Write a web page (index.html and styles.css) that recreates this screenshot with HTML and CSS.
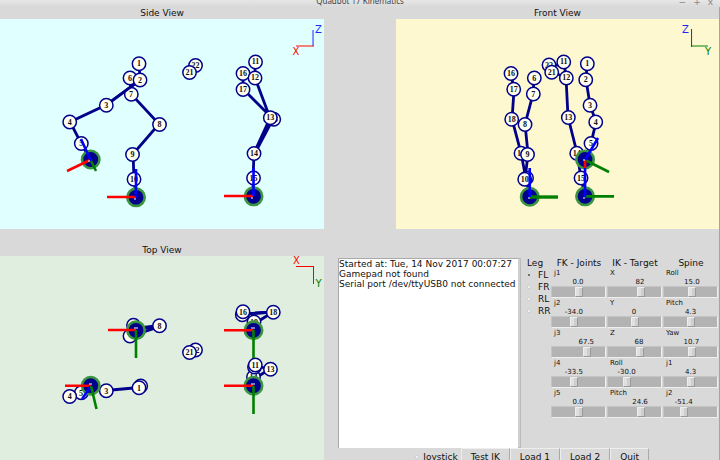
FILE: index.html
```html
<!DOCTYPE html>
<html lang="en">
<head>
<meta charset="utf-8">
<title>Quadbot 17 Kinematics</title>
<link rel="stylesheet" href="styles.css">
</head>
<body>
<header class="titlebar">
  <h1 class="title">Quadbot 17 Kinematics</h1>
  <div class="window-actions"><span>−</span><span>+</span><span>x</span></div>
</header>
<main class="window">
  <section class="views">
    <figure class="view">
      <figcaption>Side View</figcaption>
      <svg class="canvas side" viewBox="0 19 324 210" role="img" aria-label="Side View">
        <g class="axis"><path class="z" d="M313 30V46"/><path class="x" d="M296 46H314"/></g>
        <text class="name z" x="318.500" y="33">Z</text><text class="name x" x="296" y="55">X</text>
        <path class="link" d="M139 64L140 80L106 105L70 122L81 143L90 159M130 78L131 94L159 124L133 154L134 179L136 197M255 62V78L270 118L254 153L253 178V196M243 74V89L273 119L255 153"/>
        <g class="node"><circle cx="195.500" cy="65.500" r="6.700"/><text x="195.500" y="68.300">22</text></g>
        <g class="node"><circle cx="189.500" cy="72.500" r="6.700"/><text x="189.500" y="75.300">21</text></g>
        <g class="node"><circle cx="130" cy="78" r="6.700"/><text x="130" y="81">6</text></g>
        <g class="node"><circle cx="131.300" cy="94.300" r="6.700"/><text x="131" y="97">7</text></g>
        <g class="node"><circle cx="139" cy="63.700" r="6.700"/><text x="139" y="66.500">1</text></g>
        <path class="link" d="M140 80L106 105"/>
        <g class="node"><circle cx="140" cy="80" r="6.700"/><text x="140" y="82.700">2</text></g>
        <g class="node"><circle cx="106.300" cy="105.300" r="6.700"/><text x="106.300" y="108">3</text></g>
        <g class="node"><circle cx="69.700" cy="122" r="6.700"/><text x="69.700" y="124.700">4</text></g>
        <g class="node"><circle cx="81.300" cy="143.500" r="6.700"/><text x="81.300" y="146">5</text></g>
        <g class="node"><circle cx="159.500" cy="124.500" r="6.700"/><text x="159.500" y="127">8</text></g>
        <g class="node"><circle cx="132.500" cy="154.500" r="6.700"/><text x="132.500" y="157">9</text></g>
        <g class="node"><circle cx="134" cy="179.300" r="6.700"/><text x="134" y="182">10</text></g>
        <g class="node"><circle cx="243" cy="73.500" r="6.700"/><text x="243" y="76.300">16</text></g>
        <g class="node"><circle cx="243" cy="89.500" r="6.700"/><text x="243" y="92">17</text></g>
        <g class="node"><circle cx="255.500" cy="62" r="6.700"/><text x="255.500" y="64.500">11</text></g>
        <g class="node"><circle cx="255" cy="78" r="6.700"/><text x="255" y="80.500">12</text></g>
        <g class="node"><circle cx="273.700" cy="119.300" r="6.700"/><text x="273.700" y="122">18</text></g>
        <g class="node"><circle cx="270.300" cy="117.700" r="6.700"/><text x="270.300" y="120.500">13</text></g>
        <g class="node"><circle cx="254" cy="153.500" r="6.700"/><text x="254" y="156">14</text></g>
        <g class="node"><circle cx="253.500" cy="178" r="6.700"/><text x="253.500" y="180.700">15</text></g>
        <g class="foot"><circle cx="90.700" cy="159.500" r="8.700"/><circle cx="136" cy="197.300" r="8.700"/><circle cx="253.500" cy="196.300" r="8.700"/></g>
        <g class="limb"><path class="x" d="M90 160L67 171M136 197H107M253 196H224"/><path class="y" d="M90 159L96 171"/><path class="z" d="M91 161L81 139M136 197V169M253.500 196V168"/></g>
        <path class="speck" d="M134 199h2M251 198h2M88 161h2"/>
      </svg>
    </figure>
    <figure class="view">
      <figcaption>Front View</figcaption>
      <svg class="canvas front" viewBox="396 19 323 210" role="img" aria-label="Front View">
        <g class="axis"><path class="z" d="M691.500 29V47"/><path class="y" d="M691 46H708"/></g>
        <text class="name z" x="685.500" y="33">Z</text><text class="name y" x="708" y="55">Y</text>
        <path class="link" d="M511 74L514 90L512 119L521 153L526 179L530 197M534 78L533 94L525 124L528 154L525 179M564 62L566 78L568 117L577 153L581 178L585 196M587 64L586 80L590 105L596 122L591 143L585 159"/>
        <g class="node"><circle cx="511" cy="73.500" r="6.700"/><text x="511" y="76.300">16</text></g>
        <g class="node"><circle cx="513.700" cy="89.300" r="6.700"/><text x="513.700" y="92">17</text></g>
        <g class="node"><circle cx="534.300" cy="78" r="6.700"/><text x="534.300" y="80.700">6</text></g>
        <g class="node"><circle cx="533.300" cy="94" r="6.700"/><text x="533.300" y="96.700">7</text></g>
        <g class="node"><circle cx="549" cy="65" r="6.700"/><text x="549" y="68">22</text></g>
        <path class="link" d="M555 65L559 65M556 74L560 75"/>
        <g class="node"><circle cx="563.700" cy="62" r="6.700"/><text x="563.700" y="64.500">11</text></g>
        <g class="node"><circle cx="566.300" cy="78" r="6.700"/><text x="566.300" y="80.500">12</text></g>
        <g class="node"><circle cx="551.700" cy="72.300" r="6.700"/><text x="551.700" y="75">21</text></g>
        <g class="node"><circle cx="587.300" cy="63.700" r="6.700"/><text x="587.300" y="66.500">1</text></g>
        <g class="node"><circle cx="585.700" cy="79.700" r="6.700"/><text x="585.700" y="82.500">2</text></g>
        <g class="node"><circle cx="590" cy="105.300" r="6.700"/><text x="590" y="108">3</text></g>
        <g class="node"><circle cx="511.700" cy="119.300" r="6.700"/><text x="511.700" y="122">18</text></g>
        <g class="node"><circle cx="525" cy="124.500" r="6.700"/><text x="525" y="127">8</text></g>
        <g class="node"><circle cx="568.300" cy="117.500" r="6.700"/><text x="568.300" y="120.300">13</text></g>
        <g class="node"><circle cx="595.700" cy="122" r="6.700"/><text x="595.700" y="124.500">4</text></g>
        <g class="node"><circle cx="521" cy="153.300" r="6.700"/><text x="521" y="156">19</text></g>
        <g class="node"><circle cx="527.500" cy="154.500" r="6.700"/><text x="527.500" y="157">9</text></g>
        <g class="node"><circle cx="526.500" cy="178" r="6.700"/></g>
        <g class="node"><circle cx="524.700" cy="179.300" r="6.700"/><text x="524.700" y="182">10</text></g>
        <g class="node"><circle cx="576.700" cy="153.300" r="6.700"/><text x="576.700" y="156">14</text></g>
        <g class="node"><circle cx="591" cy="143.500" r="6.700"/><text x="591" y="146">5</text></g>
        <g class="node"><circle cx="581" cy="178" r="6.700"/><text x="581" y="180.700">15</text></g>
        <g class="foot"><circle cx="529.700" cy="196.700" r="8.700"/><circle cx="585" cy="159.500" r="8.700"/><circle cx="585" cy="196.300" r="8.700"/></g>
        <g class="limb"><path class="y wide" d="M530 197H558"/><path class="y" d="M585 160L609 172M585 196.300H614"/><path class="z" d="M529.700 197V168M585 197V167M585 160L598 138"/><path class="x" d="M585 160V168"/></g>
        <path class="speck" d="M528 198h2M583 198h2M583 160h2"/>
      </svg>
    </figure>
  </section>
  <section class="lower">
    <figure class="view">
      <figcaption>Top View</figcaption>
      <svg class="canvas top" viewBox="0 256 324 204" role="img" aria-label="Top View">
        <g class="axis"><path class="x" d="M296 266.500H313"/><path class="y" d="M313.500 266V284"/></g>
        <text class="name x" x="296.500" y="264">X</text><text class="name y" x="318.500" y="287">Y</text>
        <path class="link heavy" d="M136 329L159 326"/>
        <path class="link" d="M131 336L159 327M106 390.500L139 387.500M90 386L106 390M70 396L81 393M243 314L273 312L254 324M255 366L270 369L254 379"/>
        <g class="node"><circle cx="133.500" cy="325.300" r="6.700"/></g>
        <g class="node"><circle cx="130" cy="336" r="6.700"/></g>
        <g class="node"><circle cx="159.500" cy="325.700" r="6.700"/><text x="159.500" y="328.500">8</text></g>
        <g class="node"><circle cx="195.500" cy="350" r="6.700"/><text x="195.500" y="352.500">22</text></g>
        <g class="node"><circle cx="189.500" cy="352.500" r="6.700"/><text x="189.500" y="355.300">21</text></g>
        <g class="node"><circle cx="254" cy="322" r="6.700"/><text x="254" y="325">19</text></g>
        <g class="node"><circle cx="242.300" cy="314.700" r="6.700"/></g>
        <path class="link" d="M243 314L273 312"/>
        <g class="node"><circle cx="243" cy="311.700" r="6.700"/><text x="243" y="314.500">16</text></g>
        <g class="node"><circle cx="273.300" cy="312.300" r="6.700"/><text x="273.300" y="315">18</text></g>
        <g class="node"><circle cx="253.500" cy="377" r="6.700"/><text x="253.500" y="380">14</text></g>
        <g class="node"><circle cx="254.500" cy="367" r="6.700"/></g>
        <g class="node"><circle cx="255.300" cy="365" r="6.700"/><text x="255.300" y="367.500">11</text></g>
        <g class="node"><circle cx="270.500" cy="369.300" r="6.700"/><text x="270.500" y="372">13</text></g>
        <g class="node"><circle cx="140.700" cy="386" r="6.700"/></g>
        <g class="node"><circle cx="139" cy="387.700" r="6.700"/><text x="139" y="390.500">1</text></g>
        <g class="node"><circle cx="106.300" cy="390.700" r="6.700"/><text x="106.300" y="393.500">3</text></g>
        <g class="node"><circle cx="81.300" cy="392.700" r="6.700"/><text x="81" y="395.500">5</text></g>
        <g class="node"><circle cx="69.700" cy="396.500" r="6.700"/><text x="69.700" y="399.300">4</text></g>
        <g class="foot"><circle cx="136" cy="330.300" r="8.700"/><circle cx="90.700" cy="385.700" r="8.700"/><circle cx="253.500" cy="330.300" r="8.700"/><circle cx="253.500" cy="385.700" r="8.700"/></g>
        <g class="limb"><path class="x" d="M136 330H108M91 385.700H65M253 330.300H224M253 385.700H224"/><path class="z" d="M91 386L82 399"/><path class="y" d="M136 330V358M253.500 330V358M253.500 386V414M91 386L96.500 409"/></g>
        <path class="speck" d="M134 328h4M251 328h4M251 384h4M89 384h3"/>
      </svg>
    </figure>
    <div class="panel">
      <div class="tools">
        <textarea class="log" aria-label="Log" readonly>Started at: Tue, 14 Nov 2017 00:07:27
Gamepad not found
Serial port /dev/ttyUSB0 not connected</textarea>
        <div class="scrollbar"></div>
        <fieldset class="legs">
          <legend>Leg</legend>
          <label><input type="radio" name="leg" checked>FL</label>
          <label><input type="radio" name="leg">FR</label>
          <label><input type="radio" name="leg">RL</label>
          <label><input type="radio" name="leg">RR</label>
        </fieldset>
        <div class="sliders">
          <h2>FK - Joints</h2>
          <label class="slider">j1<output style="--at:.5">0.0</output><input type="range" min="-180" max="180" step="0.1" value="0"></label>
          <label class="slider">j2<output style="--at:.406">-34.0</output><input type="range" min="-180" max="180" step="0.1" value="-34"></label>
          <label class="slider">j3<output style="--at:.688">67.5</output><input type="range" min="-180" max="180" step="0.1" value="67.5"></label>
          <label class="slider">j4<output style="--at:.407">-33.5</output><input type="range" min="-180" max="180" step="0.1" value="-33.5"></label>
          <label class="slider">j5<output style="--at:.5">0.0</output><input type="range" min="-180" max="180" step="0.1" value="0"></label>
        </div>
        <div class="sliders">
          <h2>IK - Target</h2>
          <label class="slider">X<output style="--at:.637">82</output><input type="range" min="-300" max="300" value="82"></label>
          <label class="slider">Y<output style="--at:.5">0</output><input type="range" min="-300" max="300" value="0"></label>
          <label class="slider">Z<output style="--at:.613">68</output><input type="range" min="-300" max="300" value="68"></label>
          <label class="slider">Roll<output style="--at:.333">-30.0</output><input type="range" min="-90" max="90" step="0.1" value="-30"></label>
          <label class="slider">Pitch<output style="--at:.637">24.6</output><input type="range" min="-90" max="90" step="0.1" value="24.6"></label>
        </div>
        <div class="sliders">
          <h2>Spine</h2>
          <label class="slider">Roll<output style="--at:.542">15.0</output><input type="range" min="-180" max="180" step="0.1" value="15"></label>
          <label class="slider">Pitch<output style="--at:.512">4.3</output><input type="range" min="-180" max="180" step="0.1" value="4.3"></label>
          <label class="slider">Yaw<output style="--at:.53">10.7</output><input type="range" min="-180" max="180" step="0.1" value="10.7"></label>
          <label class="slider">j1<output style="--at:.512">4.3</output><input type="range" min="-180" max="180" step="0.1" value="4.3"></label>
          <label class="slider">j2<output style="--at:.357">-51.4</output><input type="range" min="-180" max="180" step="0.1" value="-51.4"></label>
        </div>
      </div>
      <div class="actions">
        <label><input type="checkbox">Joystick</label>
        <button type="button">Test IK</button>
        <button type="button">Load 1</button>
        <button type="button">Load 2</button>
        <button type="button">Quit</button>
      </div>
    </div>
  </section>
</main>
</body>
</html>
```
FILE: styles.css
```css
* { box-sizing: border-box; }
body {
  margin: 0;
  height: 100vh;
  overflow: hidden;
  background: #d9d9d9;
  color: #111;
  font: 9px/12px "DejaVu Sans", "Noto Sans", sans-serif;
}
h1, h2, figure { margin: 0; font: inherit; }

.titlebar {
  display: grid;
  grid-template-columns: 1fr auto 1fr;
  grid-template-rows: 100%;
  align-items: end;
  height: 7px;
  padding: 0 24px;
  background: linear-gradient(#e6e6e6, #d9d9d9);
  color: #444;
}
.title { grid-column: 2; font: 8px/12px "Noto Sans", sans-serif; }
.window-actions { display: flex; justify-content: flex-end; gap: 7px; color: #888; line-height: 10px; margin-right: -17px; }
.window { border-right: 1px solid #a4a4a4; }

.views { display: grid; grid-template-columns: 324fr 323fr; column-gap: 10%; }
.lower { display: grid; grid-template-columns: 324fr 395fr; margin-top: 15px; }
figcaption { text-align: center; }
.canvas { display: block; width: 100%; }
.side { background: #e0ffff; }
.front { background: #fef8d0; }
.top { background: #e0eee0; }

.canvas path { fill: none; }
.x { stroke: #f00; }
.y { stroke: #008000; }
.z { stroke: #22f; }
.axis { stroke-width: 1; }
.name { font-size: 10px; text-anchor: middle; }
.canvas .name { stroke: none; }
.name.x { fill: #f00; }
.name.y { fill: #008000; }
.name.z { fill: #22f; }
.link { stroke: #00008b; stroke-width: 2.8; }
.heavy { stroke-width: 4; }
.node circle { fill: #fffff0; stroke: #00008b; stroke-width: 1.5; }
.node text { font: bold 8px "Liberation Serif", serif; text-anchor: middle; fill: #111; }
.foot circle { fill: #00008b; stroke: #3a9440; stroke-width: 2.6; }
.limb { stroke-width: 2.6; }
.limb .z { stroke: #00f; }
.limb .wide { stroke-width: 3.4; }
.speck { stroke: #fff; stroke-width: 1; }

.panel { padding: 14px 0 0 14px; }
.tools {
  display: grid;
  grid-template-columns: 1fr 3px 30px 56px 56px 56px;
  height: 190px;
}
.log {
  width: 100%;
  padding: 0;
  border: 0;
  border-left: 1px solid #aaa;
  border-top: 1px solid #aaa;
  outline: 0;
  resize: none;
  overflow: hidden;
  white-space: pre;
  background: #fff;
  color: #111;
  font: 9px/10px "DejaVu Sans", "Noto Sans", sans-serif;
}
.scrollbar { background: #d0d0d0; border: 1px solid #bbb; border-width: 1px 1px 1px 0; }

.legs { display: flex; flex-direction: column; min-width: 0; margin: 0; padding: 0 0 0 6px; border: 0; }
.legs legend { float: left; padding: 0; line-height: 11px; }
.legs label { display: flex; align-items: center; gap: 7px; }
.legs input, .actions input {
  appearance: none;
  flex: none;
  width: 4px;
  height: 4px;
  margin: 0;
  border: 1px solid #ccc;
  border-radius: 2px;
  background: #fff;
}
.legs input:checked { border-color: #e4e4e4; background: #444; }

.sliders h2 { text-align: center; line-height: 11px; }
.slider {
  display: block;
  height: 30px;
  padding-left: 3px;
  font-size: 7px;
  line-height: 8px;
}
.slider output {
  display: flex;
  justify-content: center;
  width: 8px;
  height: 9px;
  margin-left: calc((100% - 9px) * var(--at) - 2px);
  line-height: 10px;
  white-space: nowrap;
}
.slider input {
  appearance: none;
  display: block;
  width: calc(100% + 2px);
  height: 12px;
  margin: 0 0 0 -3px;
  border: 1px solid #c4c4c4;
  border-right-color: #eee;
  border-bottom-color: #eee;
  background: #b3b3b3;
}
.slider input::-webkit-slider-thumb {
  appearance: none;
  width: 8px;
  height: 10px;
  border: 1px solid #eee;
  border-right-color: #999;
  border-bottom-color: #999;
  background: linear-gradient(90deg, #e0e0e0 50%, #cecece 50%);
}

.actions { display: flex; align-items: center; justify-content: flex-end; padding-right: 70px; }
.actions label { display: flex; align-items: center; gap: 4px; padding-right: 3px; }
.actions button {
  height: 18px;
  padding: 0 9px;
  border: 1px solid #eee;
  border-right-color: #aaa;
  border-bottom-color: #aaa;
  background: #d9d9d9;
  color: #111;
  font: inherit;
}
```
